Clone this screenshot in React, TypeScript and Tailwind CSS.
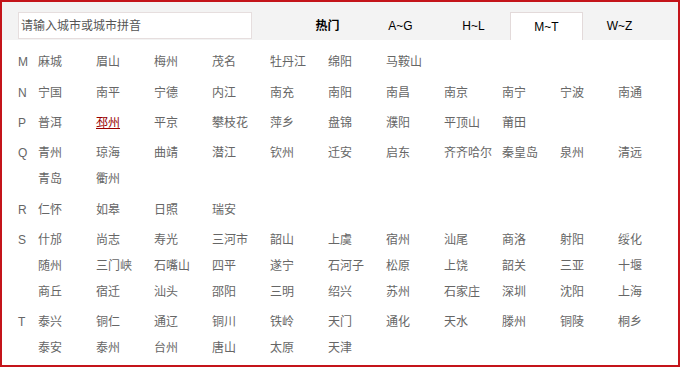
import React from "react";

const tabs = ["热门", "A~G", "H~L", "M~T", "W~Z"];

const groups: { letter: string; cities: string[] }[] = [
  { letter: "M", cities: ["麻城", "眉山", "梅州", "茂名", "牡丹江", "绵阳", "马鞍山"] },
  { letter: "N", cities: ["宁国", "南平", "宁德", "内江", "南充", "南阳", "南昌", "南京", "南宁", "宁波", "南通"] },
  { letter: "P", cities: ["普洱", "邳州", "平京", "攀枝花", "萍乡", "盘锦", "濮阳", "平顶山", "莆田"] },
  {
    letter: "Q",
    cities: ["青州", "琼海", "曲靖", "潜江", "钦州", "迁安", "启东", "齐齐哈尔", "秦皇岛", "泉州", "清远", "青岛", "衢州"],
  },
  { letter: "R", cities: ["仁怀", "如皋", "日照", "瑞安"] },
  {
    letter: "S",
    cities: [
      "什邡", "尚志", "寿光", "三河市", "韶山", "上虞", "宿州", "汕尾", "商洛", "射阳", "绥化",
      "随州", "三门峡", "石嘴山", "四平", "遂宁", "石河子", "松原", "上饶", "韶关", "三亚", "十堰",
      "商丘", "宿迁", "汕头", "邵阳", "三明", "绍兴", "苏州", "石家庄", "深圳", "沈阳", "上海",
    ],
  },
  {
    letter: "T",
    cities: [
      "泰兴", "铜仁", "通辽", "铜川", "铁岭", "天门", "通化", "天水", "滕州", "铜陵", "桐乡",
      "泰安", "泰州", "台州", "唐山", "太原", "天津",
    ],
  },
];

export default function App() {
  return (
    <div
      className="w-[680px] h-[367px] border-2 border-[#c4141a] bg-white overflow-hidden"
      style={{ fontFamily: '"Liberation Sans", "Noto Sans CJK SC", sans-serif' }}
    >
      {/* Header: search + tabs */}
      <div className="h-[38px] bg-[#f3f3f3] flex items-start pl-4">
        <input
          type="text"
          placeholder="请输入城市或城市拼音"
          className="mt-[10px] w-[234px] h-[27px] bg-white border border-[#e6dede] px-[2px] text-[12px] text-[#333] outline-none placeholder:text-[#555]"
        />
        <div className="flex ml-[39px] mt-[10px]">
          {tabs.map((t) => {
            const active = t === "M~T";
            return (
              <div
                key={t}
                className={
                  active
                    ? "w-[73px] h-[28px] flex items-center justify-center bg-white border border-b-0 border-[#e3dada] text-[12px] text-black"
                    : t === "热门"
                    ? "w-[73px] h-[28px] flex items-center justify-center text-[12px] font-bold text-black"
                    : "w-[73px] h-[28px] flex items-center justify-center text-[12px] text-black"
                }
              >
                {t}
              </div>
            );
          })}
        </div>
      </div>

      {/* City list */}
      <div className="pt-[7px] pl-4">
        {groups.map((g) => (
          <div key={g.letter} className="flex py-[2.2px]">
            <div className="w-5 h-[26px] leading-[26px] text-[12px] text-[#666]">{g.letter}</div>
            <div className="w-[638px] flex flex-wrap">
              {g.cities.map((c) => (
                <div key={c} className="w-[58px] h-[26px] leading-[26px] text-[12px] whitespace-nowrap">
                  {c === "邳州" ? (
                    <span className="text-[#990000] underline">{c}</span>
                  ) : (
                    <span className="text-[#666]">{c}</span>
                  )}
                </div>
              ))}
            </div>
          </div>
        ))}
      </div>
    </div>
  );
}
